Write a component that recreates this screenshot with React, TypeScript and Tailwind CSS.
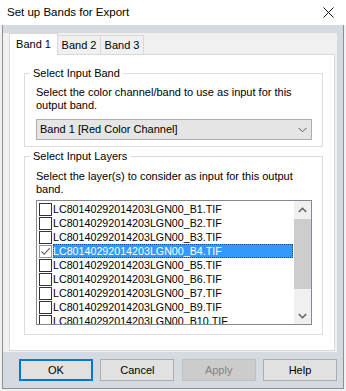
import React from "react";

const items = ["B1", "B2", "B3", "B4", "B5", "B6", "B7", "B9", "B10"];

function Check() {
  return (
    <svg width="11" height="11" viewBox="0 0 11 11">
      <path d="M1.5 5.5 L4.2 8.3 L9.8 2.2" fill="none" stroke="#5a5a5a" strokeWidth="1.1" />
    </svg>
  );
}

export default function App() {
  return (
    <div className="w-[346px] h-[391px] bg-[#f0f0f0] flex flex-col overflow-hidden font-['Liberation_Sans',Arial,sans-serif] text-black">
      <div className="h-[25px] shrink-0 bg-white flex items-center justify-between pl-[7px] pr-[12px]">
        <span className="text-[11.5px] leading-none">Set up Bands for Export</span>
        <svg width="11" height="11" viewBox="0 0 11 11">
          <path d="M0.5 0.5 L10.5 10.5 M10.5 0.5 L0.5 10.5" stroke="#111" strokeWidth="1" />
        </svg>
      </div>
      <div className="ml-[2px] w-[342px] h-[364px] shrink-0 border-l border-r border-b border-[#8a8f98] bg-[#d5dae1] flex flex-col pt-[8px]">
        <div className="w-[334px] h-[319px] bg-[#f0f0f0] pl-[6px] flex flex-col">
          <div className="h-[22px] -mb-[1px] flex items-end text-[11px]">
            <div className="relative z-10 w-[49px] h-[22px] bg-white border border-b-0 border-[#d9d9d9] flex items-center justify-center">
              Band 1
            </div>
            <div className="w-[43px] h-[19px] mb-[1px] bg-[#f0f0f0] border border-l-0 border-b-0 border-[#d9d9d9] flex items-center justify-center">
              Band 2
            </div>
            <div className="w-[43px] h-[19px] mb-[1px] bg-[#f0f0f0] border border-l-0 border-b-0 border-[#d9d9d9] flex items-center justify-center">
              Band 3
            </div>
          </div>
          <div className="w-[326px] h-[297px] bg-white border border-[#d9d9d9] flex flex-col text-[11px]">
            <fieldset className="mt-[11px] ml-[14px] w-[299px] border border-[#dcdcdc] pl-[11px] pr-[10px] pt-[6px] pb-[6px]">
              <legend className="-ml-[6px] px-[3px] leading-[14px]">Select Input Band</legend>
              <div className="leading-[13px]">
                Select the color channel/band to use as input for this
                <br />
                output band.
              </div>
              <div className="mt-[7px] h-[21px] border border-[#adadad] bg-[#e5e5e5] flex items-center justify-between pl-[3px] pr-[4px]">
                <span>Band 1 [Red Color Channel]</span>
                <svg width="9" height="6" viewBox="0 0 9 6">
                  <path d="M0.5 0.8 L4.5 4.8 L8.5 0.8" fill="none" stroke="#555" strokeWidth="1" />
                </svg>
              </div>
            </fieldset>
            <fieldset className="mt-[2px] ml-[14px] w-[299px] border border-[#dcdcdc] pl-[11px] pr-[10px] pt-[7px] pb-[9px]">
              <legend className="-ml-[6px] px-[3px] leading-[14px]">Select Input Layers</legend>
              <div className="leading-[13px]">
                Select the layer(s) to consider as input for this output
                <br />
                band.
              </div>
              <div className="mt-[4px] h-[125px] border border-[#828790] bg-white flex overflow-hidden text-[10.7px]">
                <div className="flex-1 pt-[1px] pl-[2px] flex flex-col">
                  {items.map((b) => {
                    const sel = b === "B4";
                    return (
                      <div key={b} className="h-[14px] shrink-0 flex items-center">
                        <div
                          className={
                            "w-[13px] h-[13px] shrink-0 bg-white border flex items-center justify-center " +
                            (sel ? "border-[#8f8f8f]" : "border-[#333333]")
                          }
                        >
                          {sel ? <Check /> : null}
                        </div>
                        <div
                          className={
                            "ml-[1px] mr-[1px] flex-1 h-[14px] flex items-center leading-none " +
                            (sel ? "bg-[#3399ff] text-white outline-1 outline-dotted outline-[#1a4f8a] -outline-offset-1" : "")
                          }
                        >
                          {"LC80140292014203LGN00_" + b + ".TIF"}
                        </div>
                      </div>
                    );
                  })}
                </div>
                <div className="w-[17px] shrink-0 bg-[#f0f0f0] flex flex-col">
                  <div className="h-[17px] flex items-center justify-center">
                    <svg width="9" height="6" viewBox="0 0 9 6">
                      <path d="M0.8 5 L4.5 1.3 L8.2 5" fill="none" stroke="#606060" strokeWidth="1.5" />
                    </svg>
                  </div>
                  <div className="mt-[1px] h-[70px] bg-[#cdcdcd]" />
                  <div className="flex-1" />
                  <div className="h-[17px] flex items-center justify-center">
                    <svg width="9" height="6" viewBox="0 0 9 6">
                      <path d="M0.8 1 L4.5 4.7 L8.2 1" fill="none" stroke="#606060" strokeWidth="1.5" />
                    </svg>
                  </div>
                </div>
              </div>
            </fieldset>
          </div>
        </div>
        <div className="mt-[7px] ml-[16px] w-[318px] flex justify-between text-[11px]">
          <div className="w-[74px] h-[22px] border-2 border-[#0078d7] bg-[#e1e1e1] flex items-center justify-center">OK</div>
          <div className="w-[74px] h-[22px] border border-[#adadad] bg-[#e1e1e1] flex items-center justify-center">Cancel</div>
          <div className="w-[74px] h-[22px] border border-[#bfbfbf] bg-[#cccccc] text-[#838383] flex items-center justify-center">Apply</div>
          <div className="w-[74px] h-[22px] border border-[#adadad] bg-[#e1e1e1] flex items-center justify-center">Help</div>
        </div>
      </div>
    </div>
  );
}
